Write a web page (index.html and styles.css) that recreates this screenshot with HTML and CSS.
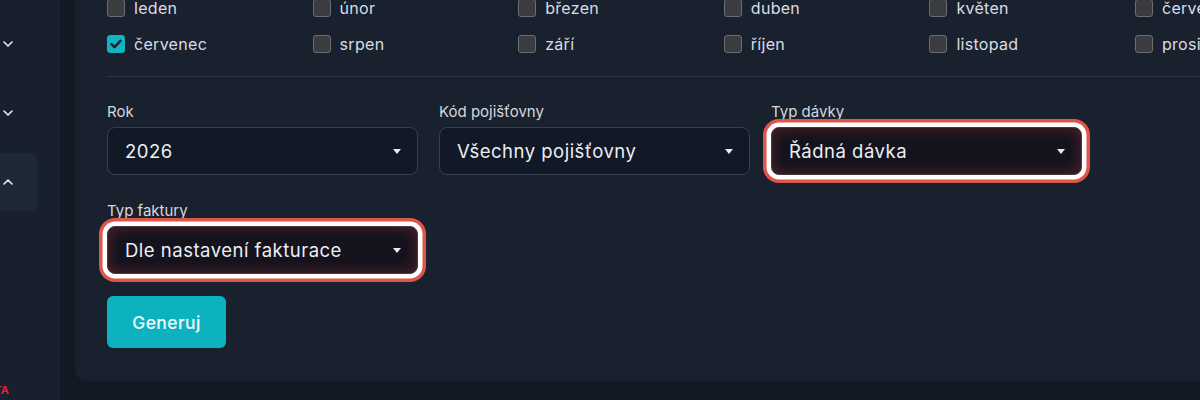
FILE: index.html
```html
<!DOCTYPE html>
<html lang="cs">
<head>
<meta charset="utf-8">
<title>Generování dávek</title>
<link rel="stylesheet" href="styles.css">
</head>
<body>
<div class="app">
  <aside class="sidebar">
    <nav class="nav">
      <div class="nav-item">
        <svg class="chev" viewBox="0 0 10 6" width="10" height="6"><polyline points="1,1 5,5 9,1"/></svg>
      </div>
      <div class="nav-item">
        <svg class="chev" viewBox="0 0 10 6" width="10" height="6"><polyline points="1,1 5,5 9,1"/></svg>
      </div>
      <div class="nav-item active">
        <svg class="chev" viewBox="0 0 10 6" width="10" height="6"><polyline points="1,5 5,1 9,5"/></svg>
      </div>
    </nav>
    <div class="badge-wrap"><span class="badge">BETA</span></div>
  </aside>
  <main class="main">
    <section class="card">
      <div class="months">
        <label class="month"><span class="cb"></span><span>leden</span></label>
        <label class="month"><span class="cb"></span><span>únor</span></label>
        <label class="month"><span class="cb"></span><span>březen</span></label>
        <label class="month"><span class="cb"></span><span>duben</span></label>
        <label class="month"><span class="cb"></span><span>květen</span></label>
        <label class="month"><span class="cb"></span><span>červen</span></label>
        <label class="month"><span class="cb checked"><svg viewBox="0 0 12 10" width="12" height="10"><polyline points="1.5,5.2 4.5,8.2 10.5,1.8"/></svg></span><span>červenec</span></label>
        <label class="month"><span class="cb"></span><span>srpen</span></label>
        <label class="month"><span class="cb"></span><span>září</span></label>
        <label class="month"><span class="cb"></span><span>říjen</span></label>
        <label class="month"><span class="cb"></span><span>listopad</span></label>
        <label class="month"><span class="cb"></span><span>prosinec</span></label>
      </div>
      <hr class="divider">
      <div class="fields">
        <div class="field">
          <div class="label">Rok</div>
          <div class="select"><span>2026</span><span class="caret"></span></div>
        </div>
        <div class="field">
          <div class="label">Kód pojišťovny</div>
          <div class="select"><span>Všechny pojišťovny</span><span class="caret"></span></div>
        </div>
        <div class="field">
          <div class="label">Typ dávky</div>
          <div class="select hl"><span>Řádná dávka</span><span class="caret"></span></div>
        </div>
        <div class="field">
          <div class="label">Typ faktury</div>
          <div class="select hl"><span>Dle nastavení fakturace</span><span class="caret"></span></div>
        </div>
      </div>
      <button class="btn">Generuj</button>
    </section>
  </main>
</div>
</body>
</html>
```
FILE: styles.css
```css
* { box-sizing: border-box; }
html, body {
  margin: 0;
  padding: 0;
  width: 1200px;
  height: 400px;
  overflow: hidden;
  background: #131923;
  font-family: Inter, "Noto Sans", "Liberation Sans", sans-serif;
  color: #e4e7ec;
}
.app {
  display: flex;
  height: 400px;
}
.sidebar {
  width: 60px;
  flex: none;
  background: #19202d;
  display: flex;
  flex-direction: column;
}
.nav {
  display: flex;
  flex-direction: column;
  gap: 11px;
  padding-top: 15px;
}
.nav-item {
  width: 37px;
  height: 58px;
  display: flex;
  align-items: center;
  padding-left: 3px;
  border-radius: 0 7px 7px 0;
}
.nav-item.active { background: #1f2936; }
.chev {
  fill: none;
  stroke: #e8ebf0;
  stroke-width: 1.6;
  stroke-linecap: round;
  stroke-linejoin: round;
}
.badge-wrap {
  margin-top: auto;
  width: 9px;
  overflow: hidden;
  display: flex;
  justify-content: flex-end;
  padding-bottom: 3px;
}
.badge {
  font-size: 11px;
  font-weight: 700;
  color: #e3202b;
  line-height: 13px;
  white-space: nowrap;
}
.main {
  flex: 1;
  padding-left: 15px;
  min-width: 0;
}
.card {
  width: 1200px;
  height: 382px;
  background: #1a212e;
  border-radius: 0 0 0 12px;
  padding: 0 0 0 32px;
}
.months {
  display: grid;
  grid-template-columns: repeat(6, 205.6px);
  row-gap: 18px;
  margin-top: -1px;
}
.month {
  display: flex;
  align-items: center;
  gap: 9px;
  height: 18px;
  font-size: 16px;
  letter-spacing: 0.3px;
  color: #d9dde3;
  white-space: nowrap;
}
.cb {
  width: 18px;
  height: 18px;
  flex: none;
  border-radius: 3px;
  background: #3a3c3f;
  border: 1.5px solid #6a6d71;
  display: flex;
  align-items: center;
  justify-content: center;
}
.cb.checked {
  background: #12b4c2;
  border-color: #12b4c2;
}
.cb svg {
  fill: none;
  stroke: #1d2732;
  stroke-width: 2.6;
  stroke-linecap: round;
  stroke-linejoin: round;
}
.divider {
  border: 0;
  height: 1px;
  background: #2a3340;
  margin: 23px 0 0 0;
}
.fields {
  display: grid;
  grid-template-columns: repeat(3, 311px);
  column-gap: 21px;
  row-gap: 26px;
  margin-top: 25px;
}
.label {
  font-size: 15px;
  line-height: 20px;
  color: #d4d8de;
  margin-bottom: 5px;
}
.select {
  height: 48px;
  border: 1px solid #363f4d;
  border-radius: 8px;
  background: #111826;
  display: flex;
  align-items: center;
  justify-content: space-between;
  padding: 0 16px 0 17px;
  font-size: 18.5px;
  letter-spacing: 0.5px;
  color: #eceef2;
}
.select.hl {
  position: relative;
  background: #15131d;
  border-color: #4a3a44;
  box-shadow:
    inset 0 0 14px rgba(210, 70, 70, 0.35),
    0 0 0 4.5px #ffffff,
    0 0 0 8px #e0554a;
}
.caret {
  width: 0;
  height: 0;
  border-left: 4px solid transparent;
  border-right: 4px solid transparent;
  border-top: 5px solid #e8eaee;
}
.btn {
  margin-top: 22px;
  width: 119px;
  height: 52px;
  border: 0;
  border-radius: 6px;
  background: #0cb2bf;
  color: #f2fbfc;
  font-family: inherit;
  font-size: 17.5px;
  letter-spacing: 0.4px;
  font-weight: 500;
}
```
